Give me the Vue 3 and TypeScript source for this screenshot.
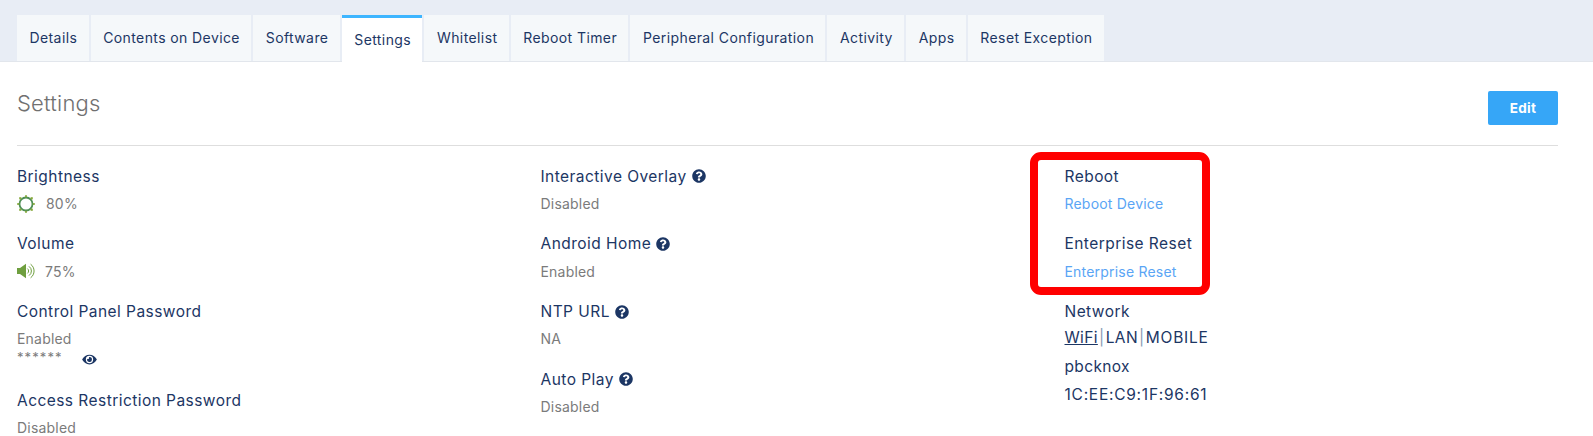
<script setup lang="ts">
const tabs = [
  'Details',
  'Contents on Device',
  'Software',
  'Settings',
  'Whitelist',
  'Reboot Timer',
  'Peripheral Configuration',
  'Activity',
  'Apps',
  'Reset Exception',
]
const activeTab = 'Settings'

const helpPath =
  'M504 256c0 136.997-111.043 248-248 248S8 392.997 8 256C8 119.083 119.043 8 256 8s248 111.083 248 248zM262.655 90c-54.497 0-89.255 22.957-116.549 63.758-3.536 5.286-2.353 12.415 2.715 16.258l34.699 26.31c5.205 3.947 12.621 3.008 16.665-2.122 17.864-22.658 30.113-35.797 57.303-35.797 20.429 0 45.698 13.148 45.698 32.958 0 14.976-12.363 22.667-32.534 33.976C247.128 238.528 216 254.941 216 296v4c0 6.627 5.373 12 12 12h56c6.627 0 12-5.373 12-12v-1.333c0-28.462 83.186-29.647 83.186-106.667 0-58.002-60.165-102-116.531-102zM256 338c-25.365 0-46 20.635-46 46 0 25.364 20.635 46 46 46s46-20.636 46-46c0-25.365-20.635-46-46-46z'

const middleItems = [
  { label: 'Interactive Overlay', value: 'Disabled' },
  { label: 'Android Home', value: 'Enabled' },
  { label: 'NTP URL', value: 'NA' },
  { label: 'Auto Play', value: 'Disabled' },
]
</script>

<template>
  <div class="page">
    <nav class="tabs">
      <div v-for="tab in tabs" :key="tab" :class="['tab', { active: tab === activeTab }]">{{ tab }}</div>
    </nav>

    <main class="content">
      <header class="head">
        <h1>Settings</h1>
        <button class="edit" type="button">Edit</button>
      </header>

      <section class="grid">
        <div class="col">
          <div class="item">
            <div class="label">Brightness</div>
            <div class="value with-icon">
              <svg class="ico-sun" viewBox="0 0 18 18">
                <circle cx="9" cy="9" r="6.5" fill="none" stroke="#4f8f55" stroke-width="1.8" />
                <g fill="#86a83a">
                  <rect x="8.1" y="0.2" width="1.8" height="2" />
                  <rect x="8.1" y="15.8" width="1.8" height="2" />
                  <rect x="0.2" y="8.1" width="2" height="1.8" />
                  <rect x="15.8" y="8.1" width="2" height="1.8" />
                  <rect x="2.2" y="2.2" width="2.2" height="2.2" />
                  <rect x="13.6" y="2.2" width="2.2" height="2.2" />
                  <rect x="2.2" y="13.6" width="2.2" height="2.2" />
                  <rect x="13.6" y="13.6" width="2.2" height="2.2" />
                </g>
              </svg>
              <span>80%</span>
            </div>
          </div>
          <div class="item">
            <div class="label">Volume</div>
            <div class="value with-icon tight">
              <svg class="ico-vol" viewBox="0 0 18 16">
                <path d="M0 5h3L9 .8v14.4L3 11H0z" fill="#6f9f3f" />
                <g fill="none" stroke="#6f9f3f" stroke-width="1">
                  <path d="M10.4 5.6a3 3 0 0 1 0 4.8" />
                  <path d="M12 3.4a5.6 5.6 0 0 1 0 9.2" />
                  <path d="M13.6 1.2a8.4 8.4 0 0 1 0 13.6" />
                </g>
              </svg>
              <span>75%</span>
            </div>
          </div>
          <div class="item">
            <div class="label">Control Panel Password</div>
            <div class="value">Enabled</div>
            <div class="secret">
              <span>******</span>
              <svg class="ico-eye" viewBox="0 0 576 512">
                <path
                  fill="#1c3664"
                  d="M572.52 241.4C518.29 135.59 410.93 64 288 64S57.68 135.64 3.48 241.41a32.35 32.35 0 0 0 0 29.19C57.71 376.41 165.07 448 288 448s230.32-71.64 284.52-177.41a32.35 32.35 0 0 0 0-29.19zM288 400a144 144 0 1 1 144-144 143.93 143.93 0 0 1-144 144zm0-240a95.31 95.31 0 0 0-25.31 3.79 47.85 47.85 0 0 1-66.9 66.9A95.78 95.78 0 1 0 288 160z"
                />
              </svg>
            </div>
          </div>
          <div class="item">
            <div class="label">Access Restriction Password</div>
            <div class="value">Disabled</div>
          </div>
        </div>

        <div class="col">
          <div v-for="item in middleItems" :key="item.label" class="item">
            <div class="label">
              {{ item.label }}
              <svg class="ico-help" viewBox="0 0 512 512"><path fill="#1c3664" :d="helpPath" /></svg>
            </div>
            <div class="value">{{ item.value }}</div>
          </div>
        </div>

        <div class="col">
          <div class="item">
            <div class="label">Reboot</div>
            <div class="value link">Reboot Device</div>
          </div>
          <div class="item">
            <div class="label">Enterprise Reset</div>
            <div class="value link">Enterprise Reset</div>
          </div>
          <div class="item">
            <div class="label">Network</div>
            <div class="net">
              <span class="on">WiFi</span><i>|</i><span>LAN</span><i>|</i><span class="caps">MOBILE</span>
            </div>
            <div class="net">pbcknox</div>
            <div class="net caps">1C:EE:C9:1F:96:61</div>
          </div>
        </div>
      </section>
    </main>

    <div class="callout"></div>
  </div>
</template>

<style>
html,
body {
  margin: 0;
  background: #fff;
  overflow: hidden;
}
</style>

<style scoped>
.page {
  position: relative;
  width: 1593px;
  height: 436px;
  overflow: hidden;
  font-family: Inter, 'Liberation Sans', sans-serif;
  color: #1c3664;
}

.tabs {
  display: flex;
  gap: 2px;
  height: 47px;
  padding: 15px 0 0 17px;
  background: #e8edf5;
  box-shadow: inset 0 -1px 0 #e2e6ec;
}

.tab {
  padding: 0 11.4px 0 12.5px;
  line-height: 46px;
  font-size: 14px;
  letter-spacing: 0.4px;
  background: #f5f8fa;
  border-bottom: 1px solid #e2e6ec;
  box-sizing: border-box;
  height: 47px;
}

.tab.active {
  background: #fff;
  border-top: 3px solid #3db5ff;
  border-bottom: 0;
  line-height: 43px;
}

.content {
  padding: 0 35px 0 17px;
}

.head {
  display: flex;
  align-items: flex-start;
  justify-content: space-between;
  height: 83px;
  border-bottom: 1px solid #dedede;
}

h1 {
  margin: 27px 0 0;
  font-size: 22px;
  line-height: 28px;
  letter-spacing: 0.2px;
  font-weight: 300;
  color: #707070;
}

.edit {
  width: 70px;
  height: 34px;
  margin-top: 29px;
  border: 0;
  border-radius: 2px;
  background: #36a6f7;
  color: #fff;
  font-family: inherit;
  font-size: 13.5px;
  letter-spacing: 0.3px;
  font-weight: 700;
}

.grid {
  display: grid;
  grid-template-columns: 523.5px 524px 1fr;
  padding-top: 17.5px;
}

.item {
  margin-bottom: 13.2px;
}

.label {
  display: flex;
  align-items: center;
  gap: 5px;
  height: 25.5px;
  font-size: 15.5px;
  letter-spacing: 0.45px;
}

.value {
  height: 29px;
  line-height: 29px;
  font-size: 14px;
  letter-spacing: 0.2px;
  color: #7b7b7b;
}

.with-icon {
  display: flex;
  align-items: center;
  gap: 11px;
}

.with-icon.tight {
  gap: 10px;
}

.ico-sun {
  width: 18px;
  height: 18px;
}

.ico-vol {
  width: 18px;
  height: 16px;
}

.ico-eye {
  width: 15px;
  height: 13px;
}

.ico-help {
  width: 14px;
  height: 14px;
}

.secret {
  display: flex;
  align-items: flex-start;
  gap: 20px;
  height: 21px;
  font-size: 13px;
  line-height: 9px;
  letter-spacing: 1.1px;
  color: #7b7b7b;
}

.secret span {
  width: 45px;
}

.link {
  color: #5aa5f5;
}

.net {
  height: 28.4px;
  line-height: 28px;
  font-size: 15.5px;
  letter-spacing: 0.35px;
}

.net.caps,
.net .caps {
  letter-spacing: 0.75px;
}

.net i {
  font-style: normal;
  margin: 0 1.2px;
  color: #8a9bb5;
}

.on {
  text-decoration: underline;
}

.callout {
  position: absolute;
  left: 1030px;
  top: 152px;
  width: 180px;
  height: 143px;
  box-sizing: border-box;
  border: 8px solid #ff0000;
  border-radius: 11px;
}
</style>
